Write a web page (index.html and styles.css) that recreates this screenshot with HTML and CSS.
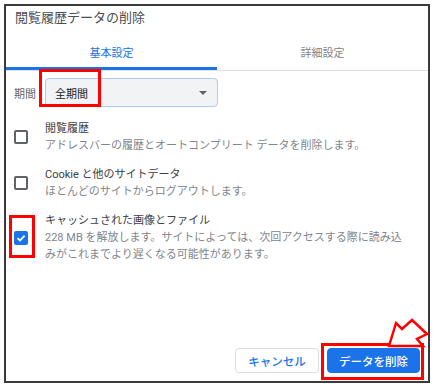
FILE: index.html
```html
<!DOCTYPE html>
<html>
<head>
<title>閲覧履歴データの削除</title>
<link rel="stylesheet" href="styles.css">
</head>
<body>

<div class="dialog">
    <div class="dialog-title">閲覧履歴データの削除</div>

    <div class="tabs">
        <div class="tab active">基本設定</div>
        <div class="tab">詳細設定</div>
    </div>

    <div class="period">
        <span class="period-label">期間</span>
        <div class="select">
            <span>全期間</span>
            <span class="select-arrow"></span>
        </div>
    </div>

    <div class="option">
        <span class="checkbox"></span>
        <div class="option-text">
            <div class="option-title">閲覧履歴</div>
            <div class="option-sub">アドレスバーの履歴とオートコンプリート データを削除します。</div>
        </div>
    </div>
    <div class="option">
        <span class="checkbox"></span>
        <div class="option-text">
            <div class="option-title">Cookie と他のサイトデータ</div>
            <div class="option-sub">ほとんどのサイトからログアウトします。</div>
        </div>
    </div>
    <div class="option">
        <span class="checkbox checked">
            <svg width="10" height="10" viewBox="0 0 10 10"><path d="M1.5 5.2 L4 7.5 L8.6 2.6" fill="none" stroke="#fff" stroke-width="1.8"/></svg>
        </span>
        <div class="option-text">
            <div class="option-title">キャッシュされた画像とファイル</div>
            <div class="option-sub">228 MB を解放します。サイトによっては、次回アクセスする際に読み込みがこれまでより遅くなる可能性があります。</div>
        </div>
    </div>

    <div class="footer">
        <button class="btn btn-cancel">キャンセル</button>
        <button class="btn btn-primary">データを削除</button>
    </div>

    <!-- annotations -->
    <div class="mark mark-period"></div>
    <div class="mark mark-check"></div>
    <div class="mark mark-button"></div>
    <svg class="mark-arrow" width="56" height="44" viewBox="380 312 56 44">
        <polygon points="389,346 396,323 402,329 412,320 427,334 417,339 423,346" fill="#fff" stroke="#ff0000" stroke-width="2.5" stroke-linejoin="miter"/>
    </svg>
</div>

</body>
</html>
```

FILE: styles.css
```css
body {
    margin: 0;
    font-family: Roboto, "Noto Sans CJK JP", sans-serif;
    background-color: #fff;
}
.dialog {
    position: relative;
    margin: 4px;
    width: 422px;
    height: 375px;
    border: 2px solid #3a3a3a;
    display: flex;
    flex-direction: column;
    background-color: #fff;
}
.dialog-title {
    padding: 2px 0 0 9px;
    height: 20px;
    line-height: 20px;
    font-size: 13px;
    color: #4a4d51;
}
.tabs {
    display: flex;
    margin-top: 6px;
    border-bottom: 1px solid #e0e0e0;
}
.tab {
    flex: 1;
    text-align: center;
    font-size: 11px;
    line-height: 20px;
    padding: 10px 0 3px;
    border-bottom: 3px solid transparent;
    color: #80868b;
}
.tab.active {
    color: #1a73e8;
    border-bottom-color: #1a73e8;
}
.period {
    display: flex;
    align-items: center;
    margin: 7px 0 7px 8px;
}
.period-label {
    width: 31px;
    font-size: 11px;
    color: #5f6368;
}
.select {
    box-sizing: border-box;
    width: 173px;
    height: 29px;
    display: flex;
    align-items: center;
    justify-content: space-between;
    padding: 0 9px;
    background-color: #f1f3f4;
    border: 1px solid #aecbfa;
    border-radius: 4px;
    font-size: 11px;
    color: #202124;
}
.select-arrow {
    width: 0;
    height: 0;
    border-left: 4px solid transparent;
    border-right: 4px solid transparent;
    border-top: 4px solid #5f6368;
    margin-right: 1px;
}
.option {
    display: flex;
    align-items: center;
    padding: 6px 0;
}
.checkbox {
    box-sizing: border-box;
    width: 14px;
    height: 14px;
    margin: 0 17px 0 8px;
    border: 2px solid #5f6368;
    border-radius: 2px;
    display: flex;
    align-items: center;
    justify-content: center;
}
.checkbox.checked {
    background-color: #1a73e8;
    border-color: #1a73e8;
}
.option-text {
    width: 364px;
    font-size: 11px;
    line-height: 17px;
}
.option-title {
    color: #3c4043;
}
.option-sub {
    color: #80868b;
}
.footer {
    margin-top: auto;
    display: flex;
    justify-content: flex-end;
    gap: 8px;
    padding: 0 8px 8px 0;
}
.btn {
    height: 25px;
    border-radius: 4px;
    font-family: Roboto, "Noto Sans CJK JP", sans-serif;
    font-size: 11.5px;
    font-weight: 500;
    cursor: pointer;
}
.btn-cancel {
    width: 84px;
    background-color: #fff;
    border: 1px solid #dadce0;
    color: #1a73e8;
}
.btn-primary {
    width: 93px;
    background-color: #1a73e8;
    border: 1px solid #1a73e8;
    color: #fff;
}
.mark {
    position: absolute;
    box-sizing: border-box;
    border: 3px solid #ff0000;
}
.mark-period {
    left: 33px;
    top: 63px;
    width: 62px;
    height: 38px;
}
.mark-check {
    left: 3px;
    top: 209px;
    width: 26px;
    height: 43px;
}
.mark-button {
    left: 315px;
    top: 337px;
    width: 103px;
    height: 37px;
}
.mark-arrow {
    position: absolute;
    left: 374px;
    top: 306px;
}
```
